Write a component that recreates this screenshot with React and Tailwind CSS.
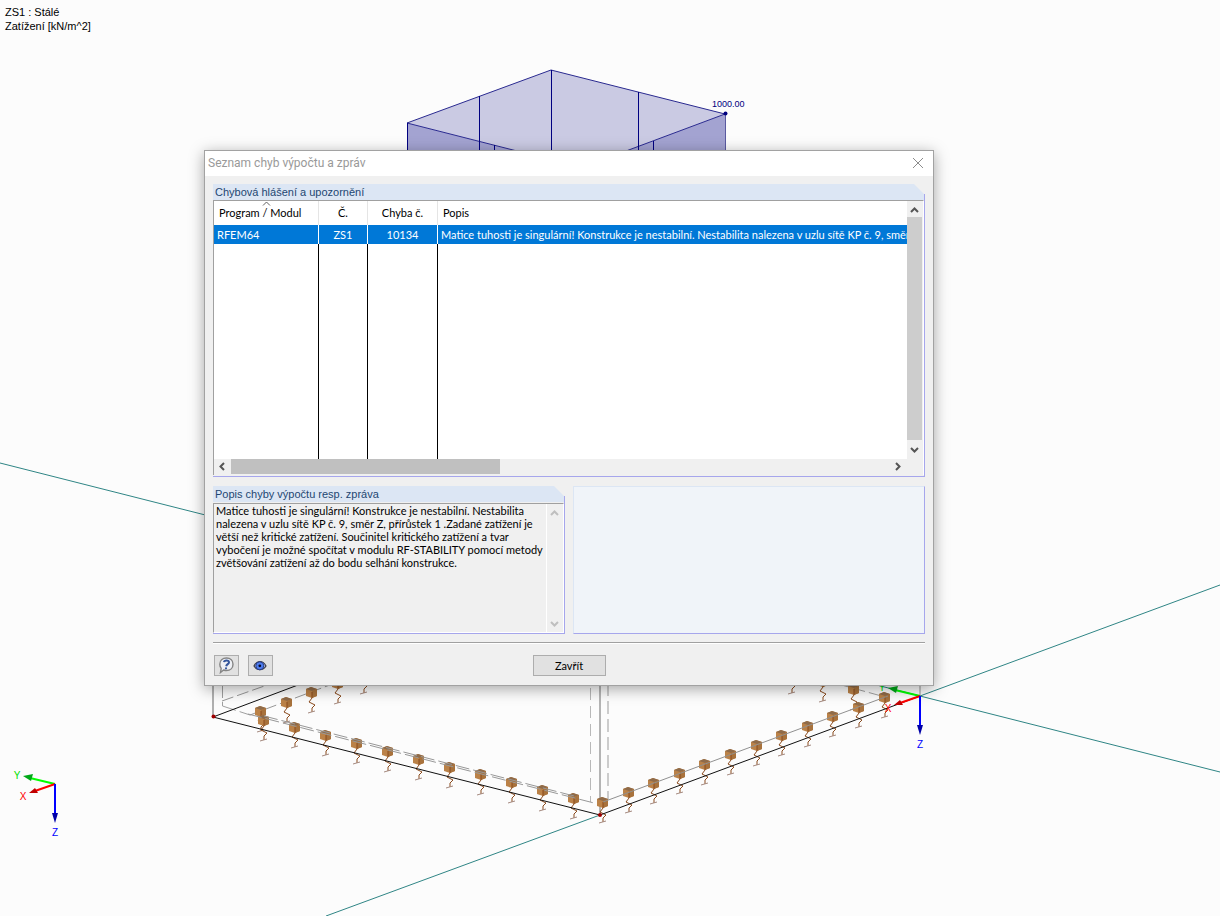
import React from 'react';

const summary =
  'Matice tuhosti je singulární! Konstrukce je nestabilní. Nestabilita nalezena v uzlu sítě KP č. 9, směr';

const message =
  'Matice tuhosti je singulární! Konstrukce je nestabilní. Nestabilita nalezena v uzlu sítě KP č. 9, směr Z, přírůstek 1 .Zadané zatížení je větší než kritické zatížení. Součinitel kritického zatížení a tvar vybočení je možné spočítat v modulu RF-STABILITY pomocí metody zvětšování zatížení až do bodu selhání konstrukce.';

const rows = [{ module: 'RFEM64', number: 'ZS1', error: '10134', text: summary }];

// Spring supports along the four edges of the slab
const supports = [
  ...[0, 1, 2, 3, 4].map((i) => [260 + i * 25.7, 711 - i * 9.5]),
  ...[0, 1, 2, 3].map((i) => [884 - i * 31, 697 - i * 7.9]),
  ...Array.from({ length: 11 }, (_, i) => [263 + i * 31, 719.5 + i * 7.85]),
  ...Array.from({ length: 11 }, (_, i) => [602 + i * 25.6, 801.5 - i * 9.5]),
];

const Support = ({ x, y }) => (
  <g transform={`translate(${Math.round(x)} ${Math.round(y)})`}>
    <path d="M-5 -3 L0 -5 L6 -3 V4 L1 6 L-5 4 Z" fill="#bb8248" />
    <path d="M-5 -3 L0 -5 L6 -3 L1 -1 Z" fill="#8f6b49" />
    <path d="M1 -1 L6 -3 V4 L1 6 Z" fill="#a8723c" />
    <path d="M1 0 V6 L-2 10 L4 13 L1 16 V20" fill="none" stroke="#8a4a1c" />
    <path d="M-3 21 L4 19" fill="none" stroke="#a58a80" />
  </g>
);

const Axes = ({ x, y }) => (
  <g transform={`translate(${x} ${y})`} fontSize="10" textAnchor="middle">
    <path d="M0 0 L-25 -6" stroke="#00ff00" strokeWidth="2" />
    <path d="M-32 -8 L-22 -10 L-24 -3 Z" fill="#00a818" />
    <path d="M0 0 L-20 7" stroke="#ff0000" strokeWidth="2" />
    <path d="M-26 9 L-20 4 L-17 9 Z" fill="#c00000" />
    <path d="M0 0 V30" stroke="#0000ff" strokeWidth="2" />
    <path d="M-3 29 H3 L0 39 Z" fill="#0000a8" />
    <text x="-38" y="-5" fill="#00e000">Y</text>
    <text x="-32" y="16" fill="#ff0000">X</text>
    <text x="0" y="52" fill="#0000ff">Z</text>
  </g>
);

const Scene = () => (
  <svg
    className="absolute inset-0 h-full w-full font-['Liberation_Sans',Arial,sans-serif]"
    viewBox="0 0 1220 916"
    preserveAspectRatio="xMinYMin slice"
    aria-hidden="true"
  >
    {/* Work plane axes */}
    <path d="M0 463 L1220 772 M326 916 L600 815 M920 696 L1220 585" stroke="#2f8585" />

    {/* Load solid */}
    <path d="M407 123 L551 70 L725 114 L626 151 H517 Z" fill="#cacae3" />
    <path d="M407 123 L517 151 H407 Z M725 114 L626 151 H725 Z" fill="#a3a3d1" />
    <path d="M407 123 L551 70 L725 114 L626 151 M407 123 L517 151" fill="none" stroke="#2a2a90" />
    <path
      d="M407.5 123 V151 M479.5 96 V151 M494.5 145 V151 M551.5 70 V151 M638.5 92 V151 M653.5 141 V151"
      stroke="#000080"
    />
    <path d="M725.5 114 V151" stroke="#5a5aa0" />
    <circle cx="725.5" cy="113.5" r="2" fill="#000080" />
    <text x="712" y="107" fontSize="9" fill="#000080">1000.00</text>

    {/* Walls and hidden edges */}
    <path d="M213 680 V717" stroke="#b0b0b0" strokeWidth="2" />
    <path d="M600 680 V815" stroke="#b4b4b4" strokeWidth="2" />
    <path d="M590.5 688 V802" stroke="#b8b8b8" strokeDasharray="12 6" />
    <path d="M608 683 V800" stroke="#cccccc" strokeWidth="2" strokeDasharray="13 5" />
    <path d="M222.5 680 V706 L250 715" fill="none" stroke="#a0a0a0" strokeDasharray="18 4" />
    <path d="M222 701 L270 684 M250 715 L335 683" stroke="#989898" strokeDasharray="12 4" />
    <path d="M838 684 L885 697" stroke="#a0a0a0" strokeDasharray="12 4" />

    {supports.map(([x, y]) => (
      <Support key={`${x}-${y}`} x={x} y={y} />
    ))}

    <path d="M248 714 L594 803 M264 716 L578 797" stroke="#989898" strokeDasharray="14 4" />
    <path d="M603 802 L888 696" stroke="#909090" />
    <path d="M298 685 L213 717 L600 815 L920 696" fill="none" stroke="#101010" />
    <circle cx="213.5" cy="716.5" r="2" fill="#a00000" />
    <circle cx="600" cy="815" r="2" fill="#a00000" />
    <path d="M920 680 V696" stroke="#909090" />

    <Axes x={920} y={696} />
    <Axes x={55} y={784} />
  </svg>
);

const chevrons = {
  up: 'M1 6 L4.5 2.5 L8 6',
  down: 'M1 3 L4.5 6.5 L8 3',
  left: 'M6 1 L2.5 4.5 L6 8',
  right: 'M3 1 L6.5 4.5 L3 8',
};

const ScrollButton = ({ direction, label, muted, className }) => (
  <button
    type="button"
    aria-label={label}
    disabled={muted}
    className={`flex shrink-0 items-center justify-center ${muted ? 'text-[#bfbfbf]' : 'text-[#555555]'} ${className}`}
  >
    <svg width="9" height="9" viewBox="0 0 9 9" fill="none" stroke="currentColor" strokeWidth="2">
      <path d={chevrons[direction]} />
    </svg>
  </button>
);

const Group = ({ title, id, children }) => (
  <section aria-labelledby={id} className="relative min-w-0">
    <h2
      id={id}
      className="mr-px h-4 bg-[#dce6f4] pl-0.5 text-[11px] leading-4 text-[#1e4672] font-['Liberation_Sans',Arial,sans-serif] [clip-path:polygon(0_0,calc(100%-10px)_0,100%_10px,100%_100%,0_100%)]"
    >
      {title}
    </h2>
    <span className="absolute top-2.5 right-0 h-2 w-px bg-[#a6a6ec]"></span>
    {children}
  </section>
);

const ErrorList = () => (
  <div className="border-r border-b border-[#a6a6ec] pb-px">
    <div className="border-t border-r border-l border-[#a0a0a0] border-r-white">
      <div className="flex">
        <div className="min-w-0 flex-1 overflow-hidden bg-white">
          <table className="w-full table-fixed border-separate border-spacing-0 text-left">
            <colgroup>
              <col className="w-[105px]" />
              <col className="w-[49px]" />
              <col className="w-[70px]" />
              <col />
            </colgroup>
            <thead>
              <tr className="h-6">
                <th className="relative border-r border-[#e5e5e5] pl-[5px] font-normal">
                  Program / Modul
                  <svg className="absolute top-0 left-12" width="9" height="5" fill="none" stroke="#606060">
                    <path d="M1 4.5 L4.5 1 L8 4.5" />
                  </svg>
                </th>
                <th className="border-r border-[#e5e5e5] text-center font-normal">Č.</th>
                <th className="border-r border-[#e5e5e5] text-center font-normal">Chyba č.</th>
                <th className="pl-[5px] font-normal">Popis</th>
              </tr>
            </thead>
            <tbody>
              {rows.map((row) => (
                <tr key={row.error} className="h-[19px] bg-[#0078d7] text-white">
                  <td className="border-r border-white pl-[3px]">{row.module}</td>
                  <td className="border-r border-white text-center">{row.number}</td>
                  <td className="border-r border-white text-center">{row.error}</td>
                  <td className="overflow-hidden pl-[3px] whitespace-nowrap">{row.text}</td>
                </tr>
              ))}
              {/* Empty part of the grid */}
              <tr className="h-[215px]">
                <td className="border-r border-black"></td>
                <td className="border-r border-black"></td>
                <td className="border-r border-black"></td>
                <td></td>
              </tr>
            </tbody>
          </table>
        </div>
        <div className="flex w-4 flex-col bg-[#f0f0f0]">
          <ScrollButton direction="up" label="Posunout nahoru" className="h-4 w-[15px] pt-0.5" />
          <div className="w-[15px] flex-1 bg-[#cdcdcd]"></div>
          <ScrollButton direction="down" label="Posunout dolů" className="h-[19px] w-[15px]" />
        </div>
      </div>
      <div className="flex h-4 bg-[#f0f0f0] pr-4">
        <ScrollButton direction="left" label="Posunout vlevo" className="h-[15px] w-[17px]" />
        <div className="flex-1">
          <div className="h-[15px] w-[41%] bg-[#c0c0c0]"></div>
        </div>
        <ScrollButton direction="right" label="Posunout vpravo" className="h-[15px] w-[19px]" />
      </div>
    </div>
  </div>
);

const HelpIcon = () => (
  <svg width="17" height="17" viewBox="0 0 17 17">
    <path
      d="M8.5 1 C12.5 1 15 3.6 15 7.2 C15 11 12.3 13.5 8.5 13.5 C7.5 13.5 6.5 13.3 5.6 13 L2.5 15.5 L3.2 11.4 C2.3 10.3 1.8 8.9 1.8 7.2 C1.8 3.6 4.5 1 8.5 1 Z"
      fill="#eef0f5"
      stroke="#858585"
      strokeWidth="1.4"
    />
    <path d="M6 5.2 C6.2 3 11 2.8 11 5.2 C11 7 8.6 7.2 8.2 9.2" fill="none" stroke="#35569c" strokeWidth="2" />
    <circle cx="8" cy="11.3" r="1.1" fill="#35569c" />
  </svg>
);

const EyeIcon = () => (
  <svg width="14" height="12" viewBox="0 0 14 12">
    <path d="M1 6 C4 0 10 0 13 6 C10 11 4 11 1 6 Z" fill="#b4c4e6" stroke="#3a3a44" strokeWidth="1.2" />
    <circle cx="6.8" cy="5.8" r="4" fill="#4f7df0" stroke="#263c86" />
    <circle cx="6.8" cy="5.8" r="1.4" fill="#0a0f28" />
  </svg>
);

const ErrorDialog = () => (
  <div
    role="dialog"
    aria-labelledby="dialog-title"
    className="absolute top-[150px] right-[286px] left-[204px] border border-[#a2a2a2] bg-[#f0f0f0] shadow-[0_3px_14px_rgba(0,0,0,0.35)]"
  >
    <header className="flex h-[25px] items-center justify-between bg-white pr-[9px] pb-px pl-[3px]">
      <h1 id="dialog-title" className="text-[12px] leading-4 text-[#999999] font-['Roboto','Noto_Sans',sans-serif]">
        Seznam chyb výpočtu a zpráv
      </h1>
      <button type="button" aria-label="Zavřít okno">
        <svg width="12" height="12" viewBox="0 0 12 12" fill="none" stroke="#8c8c8c">
          <path d="M1 1 L11 11 M11 1 L1 11" />
        </svg>
      </button>
    </header>

    <div className="px-2 pt-2 pb-[9px]">
      <Group id="errors-title" title="Chybová hlášení a upozornění">
        <ErrorList />
      </Group>

      <div className="mt-[9px] grid grid-cols-2 gap-2">
        <Group id="detail-title" title="Popis chyby výpočtu resp. zpráva">
          <div className="border-r border-b border-[#a6a6ec] pt-px">
            <div className="flex h-[130px] border border-[#a0a0a0] border-r-white border-b-white">
              <textarea
                readOnly
                aria-labelledby="detail-title"
                className="block min-w-0 flex-1 resize-none overflow-hidden pl-0.5 leading-[13px] outline-none"
                value={message}
              />
              <div className="flex w-[17px] flex-col justify-between border-l border-white py-px">
                <ScrollButton direction="up" label="Text nahoru" muted className="h-4 w-[15px]" />
                <ScrollButton direction="down" label="Text dolů" muted className="h-4 w-[15px]" />
              </div>
            </div>
          </div>
        </Group>
        <div className="border border-[#dce6f4] border-r-[#a6a6ec] border-b-[#a6a6ec] bg-[#f0f4f9]"></div>
      </div>

      <footer className="mt-2 border-t border-[#a0a0a0]">
        <div className="grid grid-cols-[1fr_auto_1fr] items-center border-t border-white pt-[11px]">
          <div className="flex gap-[9px] pl-px">
            <button
              type="button"
              aria-label="Nápověda"
              className="flex h-[21px] w-[25px] items-center justify-center border border-[#adadad] bg-[#e1e1e1]"
            >
              <HelpIcon />
            </button>
            <button
              type="button"
              aria-label="Zobrazit"
              className="flex h-[21px] w-[25px] items-center justify-center border border-[#adadad] bg-[#e1e1e1] pr-px"
            >
              <EyeIcon />
            </button>
          </div>
          <button type="button" className="h-[21px] w-[73px] border border-[#adadad] bg-[#e1e1e1]">
            Zavřít
          </button>
        </div>
      </footer>
    </div>
  </div>
);

const App = () => (
  <main className="relative min-h-screen overflow-hidden bg-[#fcfcfc] text-[11px] leading-4 text-black font-['Lato','Noto_Sans',sans-serif]">
    <Scene />
    <div className="relative pt-[5px] pl-[5px] text-[11px] leading-[14px] font-['Liberation_Sans',Arial,sans-serif]">
      <p>ZS1 : Stálé</p>
      <p>Zatížení [kN/m^2]</p>
    </div>
    <ErrorDialog />
  </main>
);

export default App;
